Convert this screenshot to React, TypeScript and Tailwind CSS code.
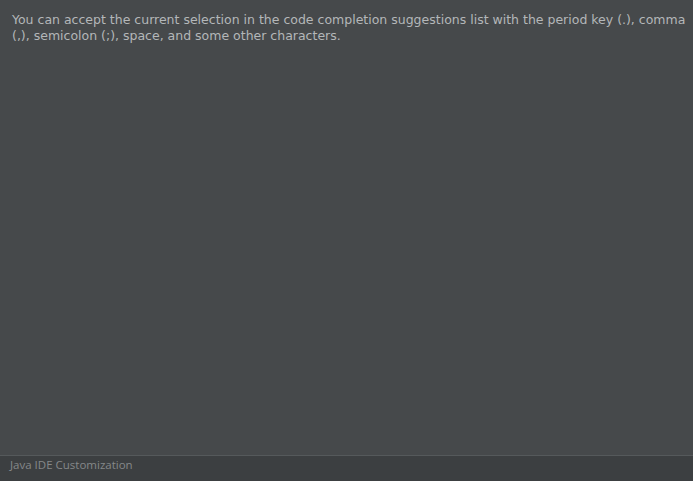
import React from "react";

const App = () => {
  return (
    <div className="flex h-[481px] w-[693px] flex-col bg-[#46494b]">
      {/* Tip text */}
      <div className="flex-1 pl-3 pt-[12px]">
        <p className="whitespace-nowrap font-['DejaVu_Sans',sans-serif] text-[12.5px] leading-[16px] text-[#b4b7b9]">
          You can accept the current selection in the code completion suggestions list with the period key (.), comma
          <br />
          (,), semicolon (;), space, and some other characters.
        </p>
      </div>

      {/* Footer */}
      <div className="h-[26px] border-t border-[#55595b] bg-[#3c3f41] px-[10px]">
        <span className="block font-['Open_Sans',sans-serif] text-[11.5px] leading-[18px] text-[#85888a]">
          Java IDE Customization
        </span>
      </div>
    </div>
  );
};

export default App;
